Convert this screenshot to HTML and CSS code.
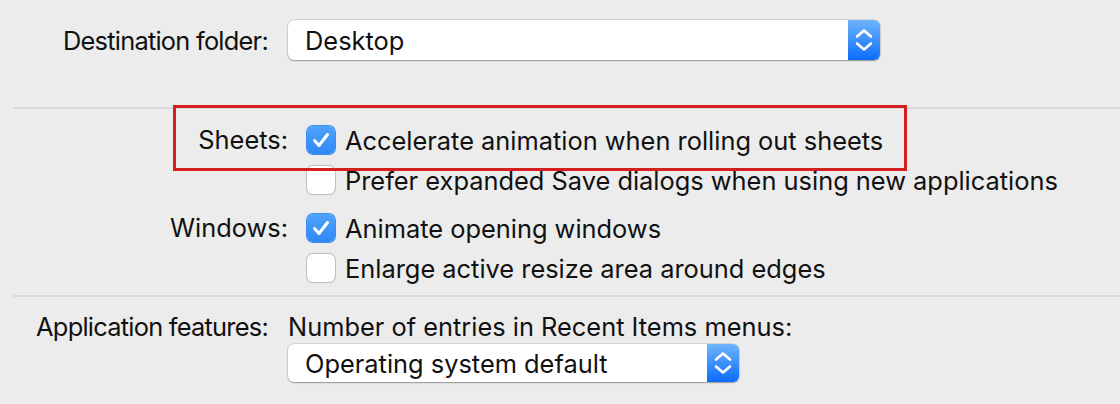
FILE: index.html
```html
<!DOCTYPE html>
<html>
<head>
<meta charset="utf-8">
<link rel="stylesheet" href="styles.css">
</head>
<body>
<div class="pane">
  <section class="sec sec-top">
    <div class="label">Destination folder:</div>
    <div class="popup popup-wide">
      <span class="popup-text">Desktop</span>
      <span class="stepper">
        <svg width="18" height="24" viewBox="0 0 18 24"><path d="M2 8.5 L9 2.5 L16 8.5" fill="none" stroke="#fff" stroke-width="2.6" stroke-linecap="round" stroke-linejoin="round"/><path d="M2 15.5 L9 21.5 L16 15.5" fill="none" stroke="#fff" stroke-width="2.6" stroke-linecap="round" stroke-linejoin="round"/></svg>
      </span>
    </div>
  </section>
  <hr class="sep sep-1">
  <section class="sec sec-checks">
    <div class="label">Sheets:</div>
    <div class="group">
      <label class="check"><span class="box on"><svg width="28" height="28" viewBox="0 0 28 28"><path d="M7.5 14.5 L12 19.5 L20.5 8.5" fill="none" stroke="#fff" stroke-width="3" stroke-linecap="round" stroke-linejoin="round"/></svg></span>Accelerate animation when rolling out sheets</label>
      <label class="check"><span class="box"></span>Prefer expanded Save dialogs when using new applications</label>
    </div>
    <div class="label">Windows:</div>
    <div class="group">
      <label class="check"><span class="box on"><svg width="28" height="28" viewBox="0 0 28 28"><path d="M7.5 14.5 L12 19.5 L20.5 8.5" fill="none" stroke="#fff" stroke-width="3" stroke-linecap="round" stroke-linejoin="round"/></svg></span>Animate opening windows</label>
      <label class="check"><span class="box"></span>Enlarge active resize area around edges</label>
    </div>
  </section>
  <hr class="sep sep-2">
  <section class="sec sec-app">
    <div class="label">Application features:</div>
    <div class="group">
      <div class="caption">Number of entries in Recent Items menus:</div>
      <div class="popup popup-narrow">
        <span class="popup-text">Operating system default</span>
        <span class="stepper">
          <svg width="18" height="24" viewBox="0 0 18 24"><path d="M2 8.5 L9 2.5 L16 8.5" fill="none" stroke="#fff" stroke-width="2.6" stroke-linecap="round" stroke-linejoin="round"/><path d="M2 15.5 L9 21.5 L16 15.5" fill="none" stroke="#fff" stroke-width="2.6" stroke-linecap="round" stroke-linejoin="round"/></svg>
        </span>
      </div>
    </div>
  </section>
  <div class="highlight"></div>
</div>
</body>
</html>
```
FILE: styles.css
```css
html, body {
  margin: 0;
  padding: 0;
  background: #ececec;
}
body {
  width: 1120px;
  height: 404px;
  overflow: hidden;
  font-family: "Inter", "Liberation Sans", sans-serif;
  font-size: 25.4px;
  color: #111;
}
.pane {
  position: relative;
  padding-top: 20px;
}
.sec {
  display: grid;
  align-items: start;
}
.label {
  text-align: right;
  white-space: nowrap;
}
.sec-top .label, .sec-app .label {
  letter-spacing: -0.75px;
}
.sec-top {
  grid-template-columns: 268px 592px;
  column-gap: 20px;
  align-items: center;
}
.popup {
  background: #fff;
  border-radius: 6px;
  box-shadow: 0 0 0 0.5px rgba(0,0,0,0.18), 0 1px 1.5px rgba(0,0,0,0.3);
  display: flex;
  align-items: center;
  overflow: hidden;
  box-sizing: border-box;
}
.popup-wide { width: 592px; height: 40px; }
.popup-narrow { width: 451px; height: 38px; }
.popup-text {
  flex: 1;
  padding-left: 17px;
  white-space: nowrap;
}
.stepper {
  width: 32px;
  align-self: stretch;
  background: linear-gradient(#6fb4fb, #0b6cfd);
  display: flex;
  align-items: center;
  justify-content: center;
}
.sep {
  margin: 0 0 0 13px;
  border: 0;
  height: 2px;
  background: #d9d9d9;
}
.sep-1 { margin-top: 47px; }
.sep-2 { margin-top: 7px; }
.sec-checks {
  grid-template-columns: 288px auto;
  column-gap: 19px;
  row-gap: 8px;
  margin-top: 11px;
}
.sec-checks .label {
  line-height: 40px;
}
.group {
  display: flex;
  flex-direction: column;
}
.check {
  display: flex;
  align-items: center;
  height: 40px;
  gap: 10px;
  white-space: nowrap;
}
.box {
  width: 28px;
  height: 28px;
  box-sizing: border-box;
  border-radius: 6px;
  background: #fff;
  box-shadow: 0 0 0 1px #bdbdbd, 0 1px 1px rgba(0,0,0,0.12);
  flex: none;
  display: block;
}
.box.on {
  background: linear-gradient(#4ea3fc, #2f88f6);
  box-shadow: 0 0 0 1px #3a8ef0;
}
.box svg { display: block; }
.sec-app {
  grid-template-columns: 268px auto;
  column-gap: 20px;
  margin-top: 13px;
}
.sec-app .label, .caption {
  line-height: 34px;
}
.caption { white-space: nowrap; }
.highlight {
  position: absolute;
  left: 173px;
  top: 105px;
  width: 734px;
  height: 66px;
  box-sizing: border-box;
  border: 3px solid #d3201f;
}
```
